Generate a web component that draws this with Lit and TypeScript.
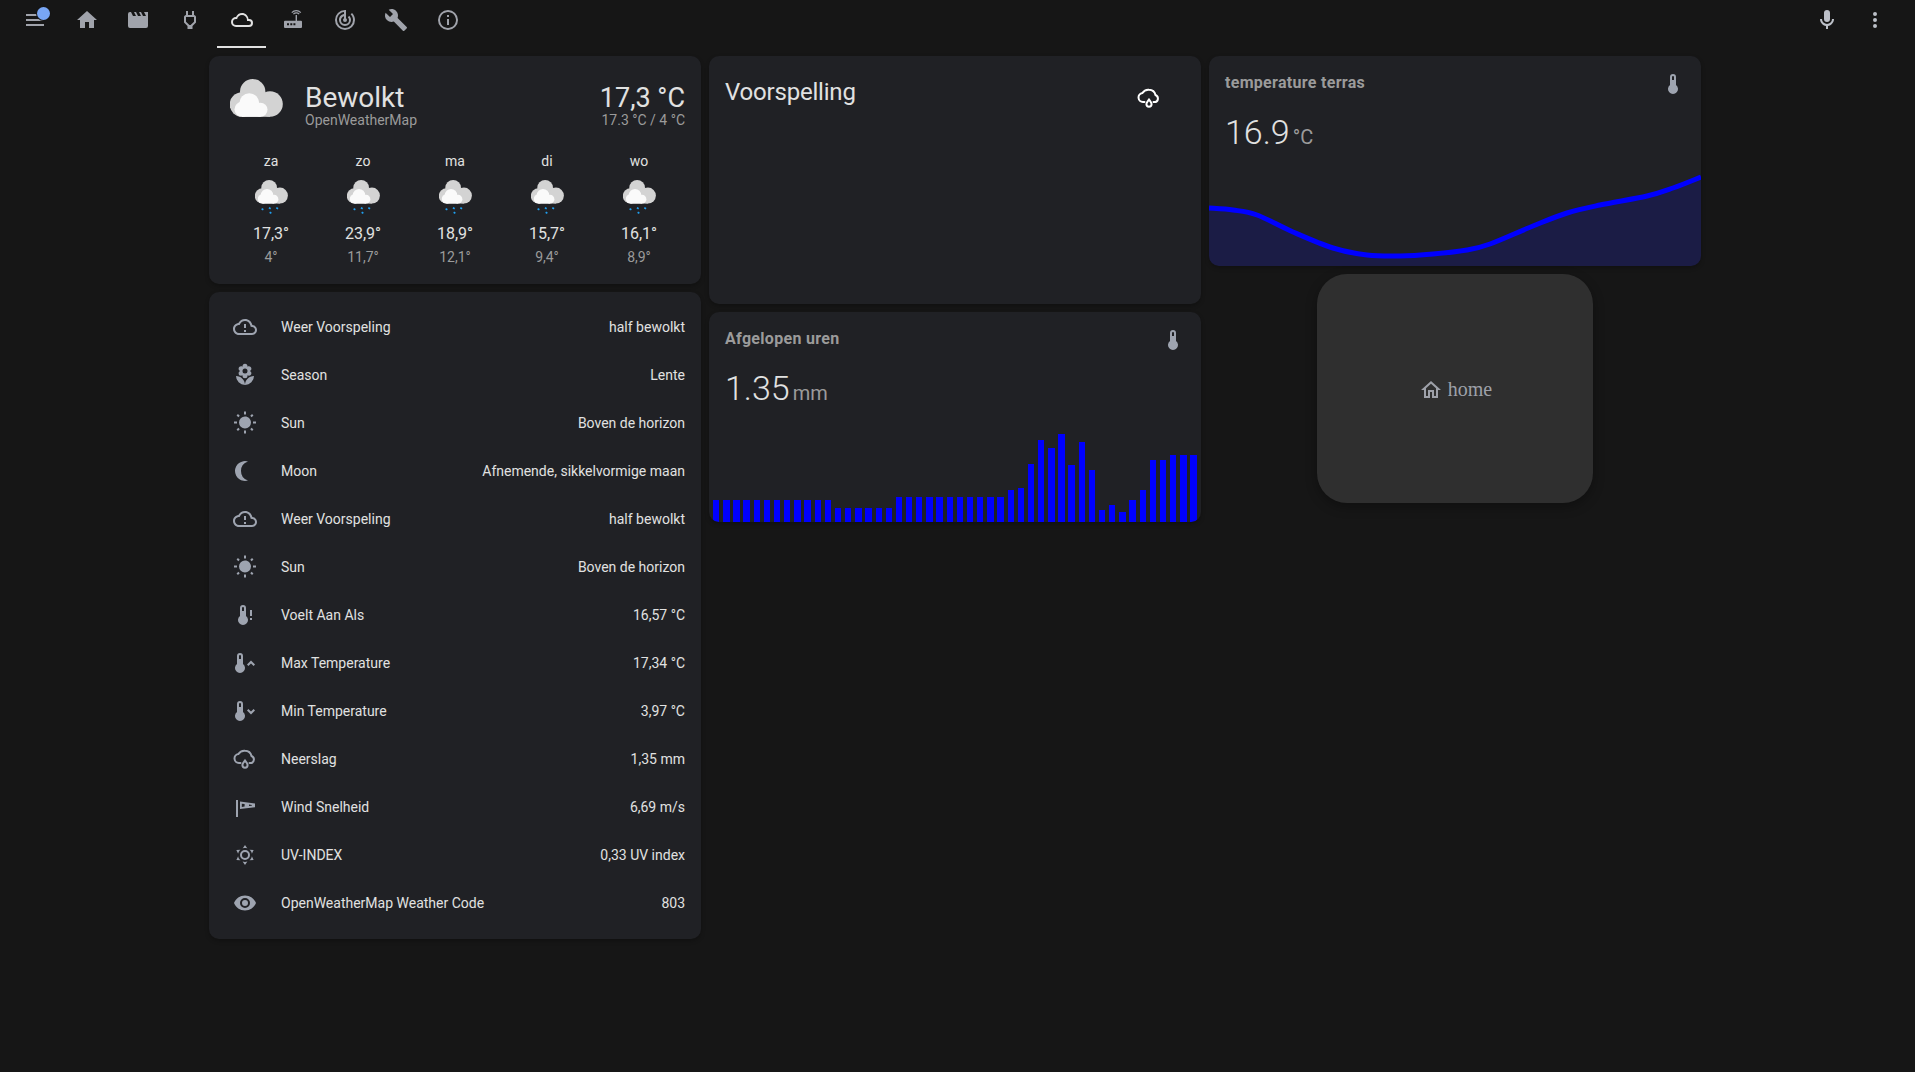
import { LitElement, css, html, svg } from "lit";
import { customElement } from "lit/decorators.js";

const P = {
  menu: "M3,6H21V8H3V6M3,11H21V13H3V11M3,16H21V18H3V16Z",
  home: "M10,20V14H14V20H19V12H22L12,3L2,12H5V20H10Z",
  movie: "M18,4L20,8H17L15,4H13L15,8H12L10,4H8L10,8H7L5,4H4A2,2 0 0,0 2,6V18A2,2 0 0,0 4,20H20A2,2 0 0,0 22,18V4H18Z",
  plug: "M16 7V3H14V7H10V3H8V7C7 7 6 8 6 9V14.5L9.5 18V21H14.5V18L18 14.5V9C18 8 17 7 16 7M16 13.67L13.09 16.59L12.67 17H11.33L10.92 16.59L8 13.67V9.09C8 9.06 15.97 9.06 16 9.09V13.67Z",
  cloud: "M6,19A5,5 0 0,1 1,14A5,5 0 0,1 6,9C7,6.65 9.3,5 12,5C15.43,5 18.24,7.66 18.5,11.03L19,11A4,4 0 0,1 23,15A4,4 0 0,1 19,19H6M19,13H17V12A5,5 0 0,0 12,7C9.5,7 7.45,8.82 7.06,11.19C6.73,11.07 6.37,11 6,11A3,3 0 0,0 3,14A3,3 0 0,0 6,17H19A2,2 0 0,0 21,15A2,2 0 0,0 19,13Z",
  radar: "M19.07,4.93L17.66,6.34C19.1,7.79 20,9.79 20,12A8,8 0 0,1 12,20A8,8 0 0,1 4,12C4,7.92 7.05,4.56 11,4.07V6.09C8.16,6.57 6,9.03 6,12A6,6 0 0,0 12,18A6,6 0 0,0 18,12C18,10.34 17.33,8.84 16.24,7.76L14.83,9.17C15.55,9.9 16,10.9 16,12A4,4 0 0,1 12,16A4,4 0 0,1 8,12C8,10.14 9.28,8.59 11,8.14V10.28C10.4,10.63 10,11.26 10,12A2,2 0 0,0 12,14A2,2 0 0,0 14,12C14,11.26 13.6,10.62 13,10.28V2H12A10,10 0 0,0 2,12A10,10 0 0,0 12,22A10,10 0 0,0 22,12C22,9.24 20.88,6.74 19.07,4.93Z",
  wrench: "M22.7,19L13.6,9.9C14.5,7.6 14,4.9 12.1,3C10.1,1 7.1,0.6 4.7,1.7L9,6L6,9L1.6,4.7C0.4,7.1 0.9,10.1 2.9,12.1C4.8,14 7.5,14.5 9.8,13.6L18.9,22.7C19.3,23.1 19.9,23.1 20.3,22.7L22.6,20.4C23.1,20 23.1,19.3 22.7,19Z",
  info: "M11,9H13V7H11M12,20C7.59,20 4,16.41 4,12C4,7.59 7.59,4 12,4C16.41,4 20,7.59 20,12C20,16.41 16.41,20 12,20M12,2A10,10 0 0,0 2,12A10,10 0 0,0 12,22A10,10 0 0,0 22,12A10,10 0 0,0 12,2M11,17H13V11H11V17Z",
  mic: "M12,2A3,3 0 0,1 15,5V11A3,3 0 0,1 12,14A3,3 0 0,1 9,11V5A3,3 0 0,1 12,2M19,11C19,14.53 16.39,17.44 13,17.93V21H11V17.93C7.61,17.44 5,14.53 5,11H7A5,5 0 0,0 12,16A5,5 0 0,0 17,11H19Z",
  dots: "M12,16A2,2 0 0,1 14,18A2,2 0 0,1 12,20A2,2 0 0,1 10,18A2,2 0 0,1 12,16M12,10A2,2 0 0,1 14,12A2,2 0 0,1 12,14A2,2 0 0,1 10,12A2,2 0 0,1 12,10M12,4A2,2 0 0,1 14,6A2,2 0 0,1 12,8A2,2 0 0,1 10,6A2,2 0 0,1 12,4Z",
  cloudAlert: "M12 4C9.11 4 6.6 5.64 5.35 8.04 2.34 8.36 0 10.91 0 14 0 17.31 2.69 20 6 20H19C21.76 20 24 17.76 24 15 24 12.36 21.95 10.22 19.35 10.04 18.67 6.59 15.64 4 12 4M12 6C14.63 6 16.81 7.87 17.35 10.38L17.65 11.87 19.19 12.03C20.76 12.13 22 13.44 22 15 22 16.65 20.65 18 19 18H6C3.79 18 2 16.21 2 14 2 11.95 3.53 10.24 5.56 10.03L6.63 9.92 7.13 8.97C8.08 7.14 9.94 6 12 6M11 9V13H13V9H11M11 15V17H13V15H11Z",
  flower: "M3,13A9,9 0 0,0 12,22C12,17 7.97,13 3,13M12,5.5A2.5,2.5 0 0,1 14.5,8A2.5,2.5 0 0,1 12,10.5A2.5,2.5 0 0,1 9.5,8A2.5,2.5 0 0,1 12,5.5M5.6,10.25A2.5,2.5 0 0,0 8.1,12.75C8.63,12.75 9.12,12.58 9.5,12.31C9.5,12.47 9.5,12.65 9.5,12.75A2.5,2.5 0 0,0 12,15.25A2.5,2.5 0 0,0 14.5,12.75C14.5,12.65 14.5,12.47 14.5,12.31C14.88,12.58 15.37,12.75 15.9,12.75C17.28,12.75 18.4,11.63 18.4,10.25C18.4,9.25 17.81,8.4 16.97,8C17.81,7.6 18.4,6.74 18.4,5.75C18.4,4.37 17.28,3.25 15.9,3.25C15.37,3.25 14.88,3.41 14.5,3.69C14.5,3.53 14.5,3.35 14.5,3.25A2.5,2.5 0 0,0 12,0.75A2.5,2.5 0 0,0 9.5,3.25C9.5,3.35 9.5,3.53 9.5,3.69C9.12,3.41 8.63,3.25 8.1,3.25A2.5,2.5 0 0,0 5.6,5.75C5.6,6.74 6.19,7.6 7.03,8C6.19,8.4 5.6,9.25 5.6,10.25M12,22A9,9 0 0,0 21,13C16,13 12,17 12,22Z",
  sun: "M3.55,18.54L4.96,19.95L6.76,18.16L5.34,16.74M11,22.45C11.32,22.45 13,22.45 13,22.45V19.5H11M12,5.5A6,6 0 0,0 6,11.5A6,6 0 0,0 12,17.5A6,6 0 0,0 18,11.5C18,8.18 15.31,5.5 12,5.5M20,12.5H23V10.5H20M17.24,18.16L19.04,19.95L20.45,18.54L18.66,16.74M20.45,4.46L19.04,3.05L17.24,4.84L18.66,6.26M13,0.55H11V3.5H13M4,10.5H1V12.5H4M6.76,4.84L4.96,3.05L3.55,4.46L5.34,6.26L6.76,4.84Z",
  moon: "M2 12A10 10 0 0 0 15 21.54A10 10 0 0 1 15 2.46A10 10 0 0 0 2 12Z",
  therm: "M15 13V5A3 3 0 0 0 9 5V13A5 5 0 1 0 15 13M12 4A1 1 0 0 1 13 5V8H11V5A1 1 0 0 1 12 4Z",
  thermAlert: "M13 13V5A3 3 0 0 0 7 5V13A5 5 0 1 0 13 13M10 4A1 1 0 0 1 11 5V8H9V5A1 1 0 0 1 10 4ZM17 7H19V13H17ZM17 15H19V17H17Z",
  thermUp: "M10 13V5A3 3 0 0 0 4 5V13A5 5 0 1 0 10 13M7 4A1 1 0 0 1 8 5V8H6V5A1 1 0 0 1 7 4ZM22 13.6L20.6 15L18 12.4L15.4 15L14 13.6L18 9.6Z",
  thermDown: "M10 13V5A3 3 0 0 0 4 5V13A5 5 0 1 0 10 13M7 4A1 1 0 0 1 8 5V8H6V5A1 1 0 0 1 7 4ZM22 11.4L20.6 10L18 12.6L15.4 10L14 11.4L18 15.4Z",
  windsock: "M3 5H5V22H3ZM7 6.6L22 8.4V12.2L7 14ZM8.8 8.7V11.9L11.6 11.6V9ZM16 9.6V11L18.8 10.7V9.9Z",
  uv: "M12,7A5,5 0 0,1 17,12A5,5 0 0,1 12,17A5,5 0 0,1 7,12A5,5 0 0,1 12,7M12,9A3,3 0 0,0 9,12A3,3 0 0,0 12,15A3,3 0 0,0 15,12A3,3 0 0,0 12,9M12,2L14.39,5.42C13.65,5.15 12.84,5 12,5C11.16,5 10.35,5.15 9.61,5.42L12,2M3.34,7L7.5,6.65C6.9,7.16 6.36,7.78 5.94,8.5C5.5,9.24 5.25,10 5.11,10.79L3.34,7M3.36,17L5.12,13.23C5.26,14 5.53,14.78 5.95,15.5C6.37,16.24 6.91,16.86 7.5,17.37L3.36,17M20.65,7L18.88,10.79C18.74,10 18.47,9.23 18.05,8.5C17.63,7.78 17.1,7.15 16.5,6.64L20.65,7M20.64,17L16.5,17.36C17.09,16.85 17.62,16.22 18.04,15.5C18.46,14.77 18.73,14 18.87,13.21L20.64,17M12,22L9.59,18.56C10.33,18.83 11.14,19 12,19C12.82,19 13.63,18.83 14.37,18.56L12,22Z",
  eye: "M12,9A3,3 0 0,0 9,12A3,3 0 0,0 12,15A3,3 0 0,0 15,12A3,3 0 0,0 12,9M12,17A5,5 0 0,1 7,12A5,5 0 0,1 12,7A5,5 0 0,1 17,12A5,5 0 0,1 12,17M12,4.5C7,4.5 2.73,7.61 1,12C2.73,16.39 7,19.5 12,19.5C17,19.5 21.27,16.39 23,12C21.27,7.61 17,4.5 12,4.5Z",
  homeOutline: "M12 5.69L17 10.19V18H15V12H9V18H7V10.19L12 5.69M12 3L2 12H5V20H11V14H13V20H19V12H22L12 3Z",
};

const icon = (d: string) => html`<svg class="icon" viewBox="0 0 24 24"><path fill="currentColor" d=${d}></path></svg>`;

const evenOdd = (d: string) =>
  html`<svg class="icon" viewBox="0 0 24 24"><path fill="currentColor" fill-rule="evenodd" d=${d}></path></svg>`;

const router = html`<svg class="icon" viewBox="0 0 24 24">
  <path
    fill="currentColor"
    fill-rule="evenodd"
    d="M4 12.7H20a1 1 0 0 1 1 1V19a1 1 0 0 1-1 1H4a1 1 0 0 1-1-1V13.7a1 1 0 0 1 1-1ZM6 15.3V17.3H8V15.3ZM9.3 15.3V17.3H11.3V15.3ZM12.4 15.3V17.3H14.4V15.3ZM14.6 7H16V12.7H14.6Z"
  ></path>
  <path fill="none" stroke="currentColor" stroke-width="1.2" d="M12.4 6.2a4 4 0 0 1 5.8 0M10.8 4.6a6.2 6.2 0 0 1 9 0"></path>
</svg>`;

const rainCloud = html`<svg class="icon" viewBox="0 0 24 24">
  <path
    fill="none"
    stroke="currentColor"
    stroke-width="2"
    stroke-linecap="round"
    d="M7.5 16H6a4.5 4.5 0 0 1-.6-8.96A7 7 0 0 1 12 3.700a6.800 6.800 0 0 1 6.500 5.300 3.800 3.800 0 0 1 .2 7H16.500"
  ></path>
  <path fill="none" stroke="currentColor" stroke-width="2" d="M12 13.500c1.400 1.800 2.600 3 2.600 4.600a2.600 2.600 0 0 1-5.200 0c0-1.600 1.200-2.800 2.600-4.600z"></path>
</svg>`;

const cloudShapes = svg`
  <g fill="#d3d3d3">
    <circle cx="22.7" cy="12.7" r="12.7"></circle>
    <circle cx="40" cy="25" r="12.8"></circle>
    <circle cx="12" cy="25.5" r="12.3"></circle>
    <rect x="12" y="20" width="28" height="17.8"></rect>
  </g>
  <g fill="#fafafa">
    <circle cx="19.3" cy="24.3" r="10"></circle>
    <circle cx="30.5" cy="30.8" r="7"></circle>
    <circle cx="12" cy="30.3" r="7.5"></circle>
    <rect x="12" y="26" width="18.5" height="11.8"></rect>
  </g>
`;

const bigCloud = html`<svg class="cloud-big" viewBox="0 0 53 38">${cloudShapes}</svg>`;

const rainIcon = html`<svg class="cloud-small" viewBox="0 0 33 34">
  <g transform="scale(0.623)">${cloudShapes}</g>
  <path
    stroke="#1e9ff0"
    stroke-width="2"
    fill="none"
    d="M7.9 28.500L7.100 30M15.200 27.500L14.400 29M15.900 32L15.100 33.400M22.600 27.500L21.800 29"
  ></path>
</svg>`;

const tabs = [P.home, P.movie, P.plug, P.cloud, null, P.radar, P.wrench, P.info];

const forecast = [
  ["za", "17,3°", "4°"],
  ["zo", "23,9°", "11,7°"],
  ["ma", "18,9°", "12,1°"],
  ["di", "15,7°", "9,4°"],
  ["wo", "16,1°", "8,9°"],
];

const rows = [
  [icon(P.cloudAlert), "Weer Voorspeling", "half bewolkt"],
  [evenOdd(P.flower), "Season", "Lente"],
  [icon(P.sun), "Sun", "Boven de horizon"],
  [icon(P.moon), "Moon", "Afnemende, sikkelvormige maan"],
  [icon(P.cloudAlert), "Weer Voorspeling", "half bewolkt"],
  [icon(P.sun), "Sun", "Boven de horizon"],
  [icon(P.thermAlert), "Voelt Aan Als", "16,57 °C"],
  [icon(P.thermUp), "Max Temperature", "17,34 °C"],
  [icon(P.thermDown), "Min Temperature", "3,97 °C"],
  [rainCloud, "Neerslag", "1,35 mm"],
  [evenOdd(P.windsock), "Wind Snelheid", "6,69 m/s"],
  [icon(P.uv), "UV-INDEX", "0,33 UV index"],
  [icon(P.eye), "OpenWeatherMap Weather Code", "803"],
];

const bars = [
  22.3, 22.3, 22.3, 22.3, 22.3, 22.3, 22.3, 22.3, 22.3, 22.3, 22.3, 22.3,
  14.3, 14.3, 14.3, 14.3, 14.3, 14.3,
  24.7, 24.7, 24.7, 24.7, 24.7, 24.7, 24.7, 24.7, 24.7, 24.7, 24.7,
  32, 34.3, 58, 82.3, 74.3, 87.7, 57.3, 80.3, 51.7, 11.7, 17.3, 9.7, 21.7, 32.3,
  61.7, 61.7, 67.3, 67.3, 67.3,
];

// line of the temperature graph, card-relative px
const linePts: [number, number][] = [
  [0, 42], [24, 44], [48, 49], [84, 66], [124, 82], [158, 89], [191, 90], [224, 88],
  [258, 84], [281, 78], [324, 60], [358, 47], [391, 39], [438, 30], [464, 22], [492, 11],
];

function smooth(pts: [number, number][]) {
  let d = `M${pts[0][0]} ${pts[0][1]}`;
  for (let i = 0; i < pts.length - 1; i++) {
    const p0 = pts[Math.max(i - 1, 0)];
    const p1 = pts[i];
    const p2 = pts[i + 1];
    const p3 = pts[Math.min(i + 2, pts.length - 1)];
    const c1x = p1[0] + (p2[0] - p0[0]) / 6;
    const c1y = p1[1] + (p2[1] - p0[1]) / 6;
    const c2x = p2[0] - (p3[0] - p1[0]) / 6;
    const c2y = p2[1] - (p3[1] - p1[1]) / 6;
    d += `C${c1x} ${c1y} ${c2x} ${c2y} ${p2[0]} ${p2[1]}`;
  }
  return d;
}

const lineD = smooth(linePts);

@customElement("app-root")
export class AppRoot extends LitElement {
  static styles = css`
    :host {
      display: block;
      min-height: 100vh;
      background: #161616;
      color: #e1e1e1;
      font-family: Roboto, sans-serif;
      font-size: 14px;
    }
    .icon {
      width: 24px;
      height: 24px;
      display: block;
      flex: none;
    }
    .topbar {
      height: 48px;
      display: flex;
      color: #a0a3ab;
    }
    .menu {
      position: relative;
      width: 24px;
      height: 24px;
      margin: 8px 14px 0 23px;
    }
    .badge {
      position: absolute;
      left: 14px;
      top: -1px;
      width: 13px;
      height: 13px;
      border-radius: 50%;
      background: #78a6f5;
      box-shadow: 0 0 0 1px #161616;
    }
    .tabs {
      display: flex;
    }
    .tab {
      box-sizing: border-box;
      width: 49px;
      height: 48px;
      margin: 0 1.3px;
      padding-top: 8px;
      display: flex;
      justify-content: center;
    }
    .tab.active {
      color: #e1e1e1;
      border-bottom: 2px solid #e1e1e1;
    }
    .actions {
      margin-left: auto;
      margin-right: 28px;
      padding-top: 8px;
      display: flex;
      gap: 24px;
      color: #bcc0c8;
    }
    .board {
      display: grid;
      grid-template-columns: repeat(3, 492px);
      gap: 8px;
      padding: 8px 0 0 209px;
      align-items: start;
    }
    .col {
      display: flex;
      flex-direction: column;
      gap: 8px;
    }
    .card {
      background: #202125;
      border-radius: 10px;
      box-shadow: 0 2px 4px rgba(0, 0, 0, 0.25);
      overflow: hidden;
    }
    .weather {
      height: 228px;
      box-sizing: border-box;
      padding: 24px 16px 0;
    }
    .weather-head {
      display: flex;
      height: 48px;
    }
    .cloud-big {
      width: 53px;
      height: 38px;
      margin: -1px 22px 0 5px;
      flex: none;
    }
    .cond {
      flex: 1;
    }
    .big {
      font-size: 28px;
      line-height: 32px;
      padding-top: 2px;
      margin-bottom: -2px;
    }
    .now .big {
      font-size: 27px;
    }
    .sub {
      font-size: 14px;
      line-height: 16px;
      color: #9b9b9b;
    }
    .now {
      text-align: right;
    }
    .days {
      display: grid;
      grid-template-columns: repeat(5, 1fr);
      margin-top: 23px;
      text-align: center;
    }
    .day {
      display: flex;
      flex-direction: column;
      align-items: center;
    }
    .day-name {
      line-height: 20px;
    }
    .cloud-small {
      width: 33px;
      height: 34px;
      margin: 9px 0 10px;
    }
    .day-high {
      font-size: 16px;
      line-height: 20px;
    }
    .day-low {
      margin-top: 3px;
      line-height: 20px;
      color: #9b9b9b;
    }
    .list {
      padding: 11px 16px 12px 24px;
    }
    .row {
      height: 48px;
      display: flex;
      align-items: center;
      gap: 24px;
    }
    .row .icon {
      color: #9ea4b0;
    }
    .row-name {
      flex: 1;
    }
    .forecast {
      height: 248px;
      box-sizing: border-box;
      padding: 16px 40px 0 16px;
      display: flex;
      justify-content: space-between;
      align-items: flex-start;
    }
    .forecast-title {
      font-size: 24px;
      line-height: 40px;
      letter-spacing: -0.2px;
    }
    .forecast-icon {
      color: #fff;
      margin-top: 14px;
    }
    .sensor {
      height: 210px;
      display: flex;
      flex-direction: column;
    }
    .sensor-head {
      padding: 17px 16px 0;
      height: 23px;
      display: flex;
      justify-content: space-between;
      color: #9b9b9b;
      font-size: 16px;
      font-weight: 700;
      line-height: 20px;
      letter-spacing: 0.3px;
    }
    .sensor-head .icon {
      color: #9ea4b0;
      margin-top: -1px;
    }
    .value {
      margin-top: 16px;
      padding-left: 16px;
      line-height: 40px;
      font-size: 34px;
      font-weight: 300;
    }
    .unit {
      margin-left: 3px;
      font-size: 20px;
      font-weight: 400;
      color: #9b9b9b;
    }
    .graph {
      display: block;
      margin-top: auto;
      width: 492px;
      height: 100px;
    }
    .bars {
      margin-top: auto;
      height: 88px;
      padding: 0 4px;
      display: flex;
      align-items: flex-end;
      gap: 3.8px;
    }
    .bar {
      flex: 1;
      background: #0000ff;
    }
    .tile {
      align-self: center;
      box-sizing: border-box;
      padding: 2px 0 0 1px;
      width: 276px;
      height: 229px;
      border-radius: 30px;
      background: #2f2f2f;
      box-shadow: 0 4px 12px rgba(0, 0, 0, 0.3);
      display: flex;
      align-items: center;
      justify-content: center;
      gap: 5px;
      color: #9ea1a9;
      font-family: "Liberation Serif", serif;
      font-size: 20px;
    }
  `;

  render() {
    return html`
      <div class="topbar">
        <div class="menu">${icon(P.menu)}<span class="badge"></span></div>
        <div class="tabs">
          ${tabs.map(
            (t, i) => html`<div class="tab ${i === 3 ? "active" : ""}">${t ? icon(t) : router}</div>`
          )}
        </div>
        <div class="actions">${icon(P.mic)}${icon(P.dots)}</div>
      </div>
      <div class="board">
        <div class="col">
          <div class="card weather">
            <div class="weather-head">
              ${bigCloud}
              <div class="cond">
                <div class="big">Bewolkt</div>
                <div class="sub">OpenWeatherMap</div>
              </div>
              <div class="now">
                <div class="big">17,3 °C</div>
                <div class="sub">17.3 °C / 4 °C</div>
              </div>
            </div>
            <div class="days">
              ${forecast.map(
                (d) => html`<div class="day">
                  <div class="day-name">${d[0]}</div>
                  ${rainIcon}
                  <div class="day-high">${d[1]}</div>
                  <div class="day-low">${d[2]}</div>
                </div>`
              )}
            </div>
          </div>
          <div class="card list">
            ${rows.map(
              (r) => html`<div class="row">${r[0]}<div class="row-name">${r[1]}</div><div>${r[2]}</div></div>`
            )}
          </div>
        </div>
        <div class="col">
          <div class="card forecast">
            <div class="forecast-title">Voorspelling</div>
            <div class="forecast-icon">${rainCloud}</div>
          </div>
          <div class="card sensor">
            <div class="sensor-head"><span>Afgelopen uren</span>${icon(P.therm)}</div>
            <div class="value">1.35<span class="unit">mm</span></div>
            <div class="bars">
              ${bars.map((h) => html`<div class="bar" style="height:${h}px"></div>`)}
            </div>
          </div>
        </div>
        <div class="col">
          <div class="card sensor">
            <div class="sensor-head"><span>temperature terras</span>${icon(P.therm)}</div>
            <div class="value">16.9<span class="unit">°C</span></div>
            <svg class="graph" viewBox="0 0 492 100">
              <path d="${lineD}L492 100L0 100Z" fill="#0000ff" fill-opacity="0.15"></path>
              <path d=${lineD} fill="none" stroke="#0000ff" stroke-width="5"></path>
            </svg>
          </div>
          <div class="tile">${icon(P.homeOutline)}<span>home</span></div>
        </div>
      </div>
    `;
  }
}
